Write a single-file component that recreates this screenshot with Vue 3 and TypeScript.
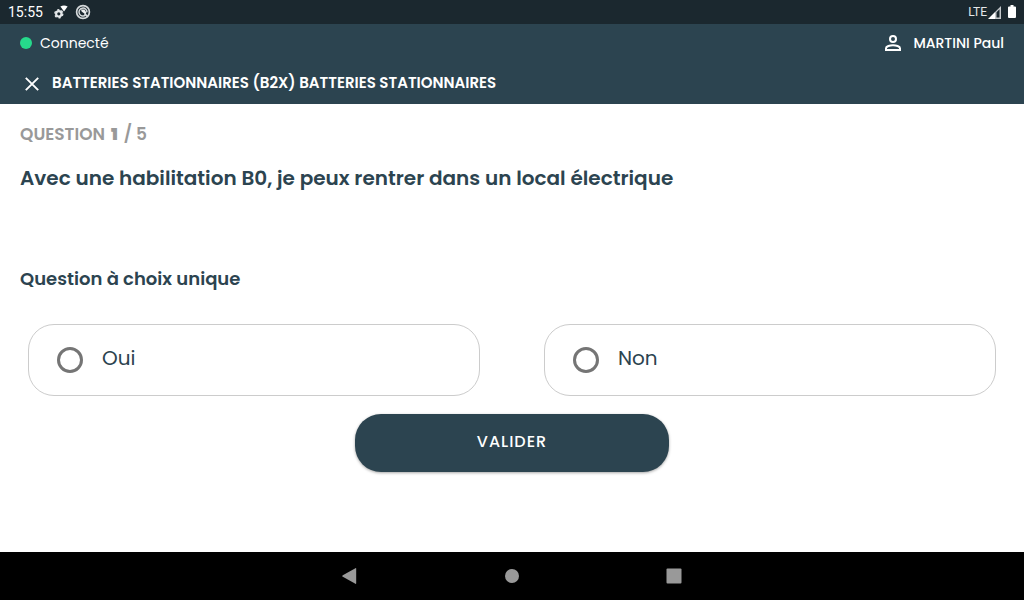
<script setup lang="ts">
import { ref } from 'vue'

interface Choice {
  id: string
  label: string
}

const user = 'MARTINI Paul'
const title = 'BATTERIES STATIONNAIRES (B2X) BATTERIES STATIONNAIRES'
const current = 1
const total = 5
const question = 'Avec une habilitation B0, je peux rentrer dans un local électrique'
const choices: Choice[] = [
  { id: 'oui', label: 'Oui' },
  { id: 'non', label: 'Non' },
]
const answer = ref<string>('')
</script>

<template>
  <div class="screen">
    <div class="status-bar">
      <div class="status-group">
        <span class="clock">15:55</span>
        <svg class="gear-icon" width="14" height="14" viewBox="0 0 14 14" aria-hidden="true">
          <circle cx="4.8" cy="8.8" r="2.7" fill="none" stroke="#e4e7e9" stroke-width="2.2" />
          <circle cx="4.8" cy="8.8" r="4" fill="none" stroke="#e4e7e9" stroke-width="1.4" stroke-dasharray="2.2 1.99" />
          <path d="M6.400 1.600Q10 -.8 13.600 1.600L10 6.400Z" fill="#fff" />
        </svg>
        <svg width="16" height="16" viewBox="0 0 16 16" aria-hidden="true">
          <circle cx="8" cy="8" r="6.400" fill="none" stroke="#d5d9db" stroke-width="1.700" />
          <path d="M10.500 11.200A4 4 0 1 1 12 8.200" fill="none" stroke="#d5d9db" stroke-width="1.500" />
          <path d="M6 5.600h3.400l2 2.800-.8 2.200L6.600 7.600Z" fill="#eef0f1" />
          <path d="M9.600 9.600l3.200 3.200" stroke="#d5d9db" stroke-width="1.800" />
        </svg>
      </div>
      <div class="status-group">
        <span class="network">LTE</span>
        <svg width="13" height="13" viewBox="0 0 13 13" aria-hidden="true">
          <path d="M0 13L7 6V13Z" fill="#fff" />
          <path d="M7 6L13 0V13H7Z M8.500 6.200V11.500H11.500V3.200Z" fill="#c3c7ca" fill-rule="evenodd" />
        </svg>
        <svg class="battery" width="8" height="14" viewBox="0 0 8 14" aria-hidden="true">
          <path d="M2.500 0h3v1.500H7a1 1 0 0 1 1 1V12a1 1 0 0 1-1 1H1a1 1 0 0 1-1-1V2.500a1 1 0 0 1 1-1h1.500Z" fill="#fff" />
        </svg>
      </div>
    </div>

    <header class="app-header">
      <div class="account-row">
        <span class="connection"><span class="dot"></span>Connecté</span>
        <span class="user">
          <svg width="16" height="16" viewBox="0 0 16 16" fill="none" stroke="#fff" stroke-width="2" aria-hidden="true">
            <circle cx="8" cy="4" r="3" />
            <path d="M1 15V13.200C1 11.400 5 10.200 8 10.200S15 11.400 15 13.200V15Z" />
          </svg>
          {{ user }}
        </span>
      </div>
      <div class="title-row">
        <button class="close" type="button" aria-label="Fermer">
          <svg width="14" height="14" viewBox="0 0 14 14" aria-hidden="true">
            <path d="M.8.8L13.200 13.200M13.200.8L.8 13.200" stroke="#fff" stroke-width="1.900" />
          </svg>
        </button>
        <h1>{{ title }}</h1>
      </div>
    </header>

    <main>
      <p class="progress"><span>QUESTION</span><b>{{ current }}</b><span>/ {{ total }}</span></p>
      <h2>{{ question }}</h2>
      <h3 id="choice-kind">Question à choix unique</h3>
      <div class="choices" role="radiogroup" aria-labelledby="choice-kind">
        <label v-for="choice in choices" :key="choice.id" class="choice" :for="choice.id">
          <input :id="choice.id" v-model="answer" type="radio" name="answer" :value="choice.id" />
          <span>{{ choice.label }}</span>
        </label>
      </div>
      <button class="submit" type="button">VALIDER</button>
    </main>

    <nav class="system-nav">
      <button type="button" aria-label="Retour">
        <svg width="16" height="18" viewBox="0 0 16 18" aria-hidden="true">
          <path d="M.8 8.200L13.400 1.200Q14.200 .8 14.200 1.800V16.200Q14.200 17.200 13.400 16.800L.8 9.800Q-.4 9 .8 8.200Z" fill="#999" />
        </svg>
      </button>
      <button type="button" aria-label="Accueil">
        <svg width="16" height="16" viewBox="0 0 16 16" aria-hidden="true"><circle cx="8" cy="8" r="7" fill="#999" /></svg>
      </button>
      <button type="button" aria-label="Applications récentes">
        <svg width="16" height="16" viewBox="0 0 16 16" aria-hidden="true"><rect x=".5" y=".5" width="15" height="15" rx="1" fill="#999" /></svg>
      </button>
    </nav>
  </div>
</template>

<style>
body {
  margin: 0;
  background: #fff;
}
</style>

<style scoped>
.screen {
  display: flex;
  flex-direction: column;
  min-height: 100vh;
  color: #2c4450;
  font-family: Poppins, Inter, "Liberation Sans", sans-serif;
}

h1,
h2,
h3,
p {
  margin: 0;
}

button {
  border: 0;
  padding: 0;
  background: none;
  color: inherit;
  font: inherit;
  cursor: pointer;
}

svg {
  display: block;
  flex: none;
}

.status-bar {
  display: flex;
  justify-content: space-between;
  align-items: center;
  height: 24px;
  padding: 0 8px;
  background: #1b282f;
  color: #fff;
  font-family: Roboto, sans-serif;
}

.status-group {
  display: flex;
  align-items: center;
}

.clock {
  margin-right: 11px;
  font-size: 14px;
}

.gear-icon {
  margin-right: 7px;
}

.network {
  margin-right: 1px;
  color: #e4e7e9;
  font-size: 12px;
}

.battery {
  margin-left: 7px;
}

.app-header {
  padding: 0 20px;
  background: #2c4450;
  color: #fff;
}

.account-row {
  display: flex;
  justify-content: space-between;
  align-items: center;
  height: 38px;
  font-size: 14px;
}

.connection {
  display: flex;
  align-items: center;
  gap: 8px;
}

.dot {
  width: 12px;
  height: 12px;
  border-radius: 50%;
  background: #26d98b;
}

.user {
  display: flex;
  align-items: center;
  gap: 12px;
  font-weight: 500;
}

.title-row {
  display: flex;
  align-items: center;
  height: 42px;
  padding: 0 4px;
}

.close {
  padding: 2px 0 0 1px;
}

h1 {
  margin-left: 13px;
  padding-bottom: 2px;
  font-size: 15px;
  font-weight: 600;
}

main {
  display: flex;
  flex: 1;
  flex-direction: column;
  padding: 18px 20px;
}

.progress {
  display: flex;
  gap: 6px;
  color: #999;
  font-size: 17px;
  font-weight: 600;
  line-height: 24px;
}

h2 {
  margin-top: 18px;
  min-height: 74px;
  font-size: 20px;
  font-weight: 600;
  line-height: 28px;
}

h3 {
  margin-top: 28px;
  font-size: 18px;
  font-weight: 600;
  line-height: 26px;
}

.choices {
  display: grid;
  grid-template-columns: 1fr 1fr;
  gap: 64px;
  margin: 32px 8px 18px;
}

.choice {
  display: flex;
  align-items: center;
  gap: 19px;
  box-sizing: border-box;
  height: 72px;
  padding: 0 28px;
  border: 1px solid #ccc;
  border-radius: 26px;
  font-size: 20px;
  line-height: 28px;
  cursor: pointer;
}

.choice span {
  padding-bottom: 4px;
}

.choice input {
  appearance: none;
  box-sizing: border-box;
  width: 26px;
  height: 26px;
  margin: 0;
  border: 3px solid #757575;
  border-radius: 50%;
}

.choice input:checked {
  background: #2c4450;
  background-clip: content-box;
  padding: 4px;
}

.submit {
  align-self: center;
  width: 32%;
  height: 58px;
  padding-bottom: 3px;
  border-radius: 26px;
  background: #2c4450;
  box-shadow: 0 1px 3px rgba(0, 0, 0, 0.35);
  color: #fff;
  font-size: 16px;
  font-weight: 500;
  letter-spacing: 1px;
}

.system-nav {
  display: flex;
  justify-content: center;
  align-items: center;
  gap: 114px;
  height: 48px;
  background: #000;
}

.system-nav button {
  display: grid;
  place-items: center;
  width: 48px;
  height: 48px;
}
</style>
